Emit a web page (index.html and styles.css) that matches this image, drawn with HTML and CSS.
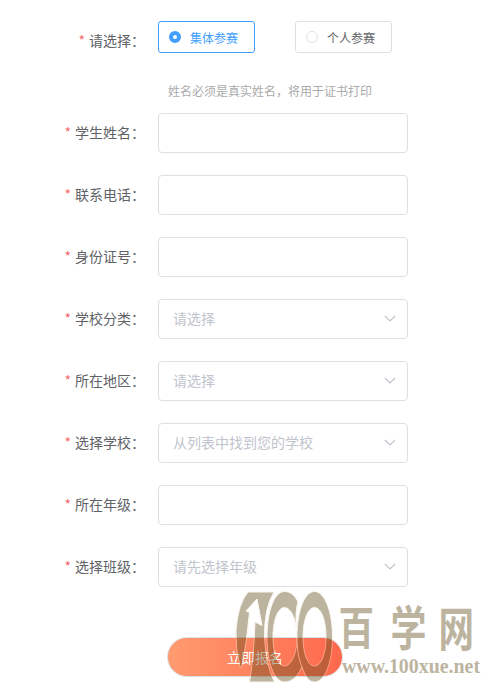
FILE: index.html
```
<!DOCTYPE html>
<html lang="zh-CN">
<head>
    <meta charset="UTF-8">
    <title>立即报名</title>
    <link rel="stylesheet" href="styles.css">
</head>
<body>
<form class="form">
    <div class="form-item">
        <div class="label">请选择：</div>
        <div class="radio-group">
            <div class="radio checked"><span class="dot"></span>集体参赛</div>
            <div class="radio"><span class="dot"></span>个人参赛</div>
        </div>
    </div>
    <div class="tip">姓名必须是真实姓名，将用于证书打印</div>
    <div class="form-item">
        <div class="label">学生姓名：</div>
        <div class="field"></div>
    </div>
    <div class="form-item">
        <div class="label">联系电话：</div>
        <div class="field"></div>
    </div>
    <div class="form-item">
        <div class="label">身份证号：</div>
        <div class="field"></div>
    </div>
    <div class="form-item">
        <div class="label">学校分类：</div>
        <div class="field">请选择<svg class="arrow" viewBox="0 0 12 8"><path d="M1 1l5 5 5-5"/></svg></div>
    </div>
    <div class="form-item">
        <div class="label">所在地区：</div>
        <div class="field">请选择<svg class="arrow" viewBox="0 0 12 8"><path d="M1 1l5 5 5-5"/></svg></div>
    </div>
    <div class="form-item">
        <div class="label">选择学校：</div>
        <div class="field">从列表中找到您的学校<svg class="arrow" viewBox="0 0 12 8"><path d="M1 1l5 5 5-5"/></svg></div>
    </div>
    <div class="form-item">
        <div class="label">所在年级：</div>
        <div class="field"></div>
    </div>
    <div class="form-item">
        <div class="label">选择班级：</div>
        <div class="field">请先选择年级<svg class="arrow" viewBox="0 0 12 8"><path d="M1 1l5 5 5-5"/></svg></div>
    </div>
    <button type="button" class="submit">立即报名</button>
</form>

<!-- site watermark, lies over the button -->
<svg class="watermark" viewBox="230 585 261 107">
    <g class="mark">
        <!-- logo: swoosh with an arrow cut out, then two linked rings -->
        <g class="logo">
            <path d="M248 592H274Q264 608 264.500 638Q266 666 274.500 682H249.500Q254 655 255 622L262 625.500L257 599L246 611L249.500 612.500Q247 640 242 667H240Q235 648 236 630Q238 604 248 592Z"/>
            <path fill-rule="evenodd" d="M284.500 591.500C291 591.500 295 596 298 602C295 612 296 622 297 637C298 655 301 661 303 664C299 675 293 682 284.500 682C274 682 267 662 267 637S274 591.500 284.500 591.500ZM284.500 607.500C278 607.500 273 620 273 637S278 666 284.500 666S297 654 297 637S291 607.500 284.500 607.500Z"/>
            <path fill-rule="evenodd" d="M314.500 591.500C325 591.500 332.500 612 332.500 637S325 682 314.500 682C308 682 305 675 302 667C298 657 297 648 297 637C297 612 304 591.500 314.500 591.500ZM314.500 607.500C308 607.500 303 620 303 637S308 666 314.500 666S326 654 326 637S321 607.500 314.500 607.500Z"/>
        </g>
        <text class="name" transform="translate(338.500 645) scale(.79 1)">百</text>
        <text class="name" transform="translate(390.500 646) scale(.8 1.06)">学</text>
        <text class="name" transform="translate(438.500 646) scale(.79 1.03)">网</text>
        <text class="url" x="342" y="673" textLength="138" lengthAdjust="spacingAndGlyphs">www.100xue.net</text>
    </g>
</svg>
</body>
</html>
```

FILE: styles.css
```
* {
    box-sizing: border-box;
}
body {
    margin: 0;
    height: 692px;
    background: #fff;
    position: relative;
    overflow: hidden;
    font-family: "Noto Sans CJK SC", sans-serif;
    font-size: 14px;
    color: #606266;
}
.form {
    padding-top: 21px;
}
.form-item {
    display: flex;
    height: 40px;
    margin-bottom: 22px;
}
.label {
    width: 158px;
    padding-right: 13px;
    line-height: 38px;
    text-align: right;
}
.label::before {
    content: "*";
    color: #f56c6c;
    margin-right: 4px;
}
.radio-group {
    display: flex;
    gap: 40px;
}
.radio {
    display: flex;
    align-items: center;
    width: 97px;
    height: 32px;
    padding-left: 10px;
    border: 1px solid #dcdfe6;
    border-radius: 3px;
    font-size: 12px;
}
.dot {
    width: 12px;
    height: 12px;
    margin-right: 9px;
    border: 1px solid #dcdfe6;
    border-radius: 50%;
}
.radio.checked {
    border-color: #409eff;
    color: #409eff;
}
.checked .dot {
    border: 4px solid #409eff;
}
.tip {
    height: 20px;
    margin: -2px 0 12px 168px;
    line-height: 20px;
    font-size: 12px;
    color: #aaa;
}
.field {
    display: flex;
    align-items: center;
    justify-content: space-between;
    width: 250px;
    height: 40px;
    padding: 0 11px 2px 14px;
    border: 1px solid #dcdfe6;
    border-radius: 4px;
    color: #c0c4cc;
}
.arrow {
    width: 12px;
    height: 8px;
    margin-top: 2px;
    fill: none;
    stroke: #c0c4cc;
    stroke-width: 1.2;
}
.submit {
    display: block;
    width: 176px;
    height: 40px;
    margin: 50px 0 0 167px;
    padding: 0;
    border: 1px solid #dcdfe6;
    border-radius: 20px;
    background: linear-gradient(90deg, #ff9b70, #ff684d);
    color: #fff;
    font-family: inherit;
    font-size: 14px;
}
.watermark {
    position: absolute;
    left: 230px;
    top: 585px;
    width: 261px;
    height: 107px;
}
.mark {
    fill: #604b18;
    opacity: 0.41;
}
.logo {
    stroke: #f4ecd8;
    stroke-width: 1;
}
.name {
    font: bold 45px "Noto Sans CJK SC", sans-serif;
}
.url {
    font: bold 20px "Liberation Serif", serif;
}
```
